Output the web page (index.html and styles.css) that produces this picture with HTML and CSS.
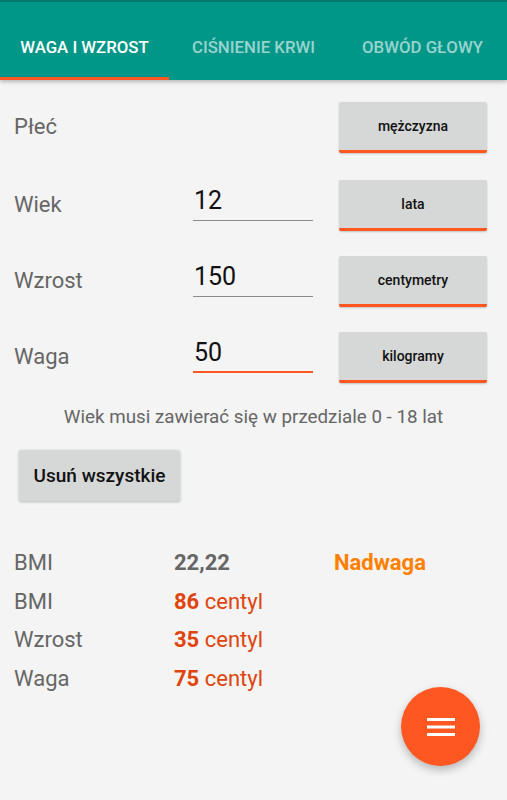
FILE: index.html
```html
<!DOCTYPE html>
<html lang="pl">
<head>
  <meta charset="UTF-8">
  <meta name="viewport" content="width=device-width, initial-scale=1.0">
  <title>Centyle</title>
  <link rel="stylesheet" href="styles.css">
</head>
<body>
  <header class="appbar">
    <nav class="tabs">
      <div class="tab active">WAGA I WZROST</div>
      <div class="tab">CIŚNIENIE KRWI</div>
      <div class="tab">OBWÓD GŁOWY</div>
    </nav>
  </header>

  <main class="content">
    <section class="form">
      <div class="row">
        <span class="label">Płeć</span>
        <span></span>
        <button class="unit">mężczyzna</button>
      </div>
      <div class="row">
        <span class="label">Wiek</span>
        <div class="field">12</div>
        <button class="unit">lata</button>
      </div>
      <div class="row">
        <span class="label">Wzrost</span>
        <div class="field">150</div>
        <button class="unit">centymetry</button>
      </div>
      <div class="row">
        <span class="label">Waga</span>
        <div class="field focused">50</div>
        <button class="unit">kilogramy</button>
      </div>
    </section>

    <p class="hint">Wiek musi zawierać się w przedziale 0 - 18 lat</p>

    <button class="clear">Usuń wszystkie</button>

    <section class="results">
      <div class="result">
        <span class="label">BMI</span>
        <span class="value">22,22</span>
        <span class="status">Nadwaga</span>
      </div>
      <div class="result">
        <span class="label">BMI</span>
        <span class="centyl"><b>86</b> centyl</span>
      </div>
      <div class="result">
        <span class="label">Wzrost</span>
        <span class="centyl"><b>35</b> centyl</span>
      </div>
      <div class="result">
        <span class="label">Waga</span>
        <span class="centyl"><b>75</b> centyl</span>
      </div>
    </section>
  </main>

  <button class="fab" aria-label="menu">
    <svg width="28" height="18" viewBox="0 0 28 18">
      <rect x="0" y="0" width="28" height="3" fill="#fff"/>
      <rect x="0" y="7.5" width="28" height="3" fill="#fff"/>
      <rect x="0" y="15" width="28" height="3" fill="#fff"/>
    </svg>
  </button>
</body>
</html>
```

FILE: styles.css
```css
* {
  box-sizing: border-box;
  font-family: Roboto, "Noto Sans", sans-serif;
}
body {
  margin: 0;
  background: #f4f4f4;
  color: #666;
  min-height: 800px;
  position: relative;
}
.appbar {
  background-color: #009688;
  border-top: 2px solid #00796b;
  box-shadow: 0 2px 4px rgba(0, 0, 0, 0.25);
}
.tabs {
  display: flex;
  height: 78px;
  padding-top: 12px;
}
.tab {
  flex: 1;
  display: flex;
  align-items: center;
  justify-content: center;
  font-size: 16.8px;
  font-weight: 500;
  color: rgba(255, 255, 255, 0.6);
  border-bottom: 3px solid transparent;
  padding-top: 3px;
}
.tab.active {
  color: #fff;
  border-bottom-color: #ff5722;
}
.content {
  padding: 22px 0 0;
}
.form {
  display: flex;
  flex-direction: column;
  gap: 25px;
}
.row {
  display: grid;
  grid-template-columns: 153px 120px 148px;
  column-gap: 26px;
  height: 51px;
  padding-left: 14px;
  align-items: center;
}
.row:nth-child(2) {
  margin-top: 2px;
}
.label {
  font-size: 22px;
  color: #666;
}
.row .label {
  margin-top: -3px;
}
.field {
  align-self: end;
  margin-bottom: 10px;
  height: 37px;
  font-size: 25px;
  line-height: 34px;
  color: #111;
  padding-left: 1px;
  border-bottom: 1px solid #8a8a8a;
}
.field.focused {
  border-bottom: 2px solid #ff5722;
}
.unit {
  height: 51px;
  border: none;
  border-bottom: 3px solid #ff5722;
  border-radius: 2px;
  background: #d6d7d7;
  box-shadow: 0 1px 2px rgba(0, 0, 0, 0.2);
  font-size: 14px;
  font-weight: 500;
  color: #111;
  padding: 0;
}
.hint {
  margin: 23px 0 0;
  text-align: center;
  font-size: 18.8px;
  color: #666;
}
.clear {
  display: block;
  margin: 22px 0 0 19px;
  width: 161px;
  height: 51px;
  border: none;
  border-radius: 2px;
  background: #d6d7d7;
  box-shadow: 0 1px 3px rgba(0, 0, 0, 0.25);
  font-size: 19px;
  font-weight: 500;
  color: #111;
  padding: 0;
}
.results {
  margin-top: 43px;
  padding-left: 14px;
}
.result {
  display: grid;
  grid-template-columns: 160px 160px 1fr;
  line-height: 38.7px;
  font-size: 22px;
}
.value {
  font-weight: bold;
  color: #666;
}
.status {
  font-weight: bold;
  color: #ff7f00;
}
.centyl {
  color: #e0440e;
}
.fab {
  position: absolute;
  right: 27px;
  bottom: 34px;
  width: 79px;
  height: 79px;
  border-radius: 50%;
  border: none;
  background: #ff5722;
  box-shadow: 0 4px 8px rgba(0, 0, 0, 0.25);
  display: flex;
  align-items: center;
  justify-content: center;
  padding: 0;
}
```
